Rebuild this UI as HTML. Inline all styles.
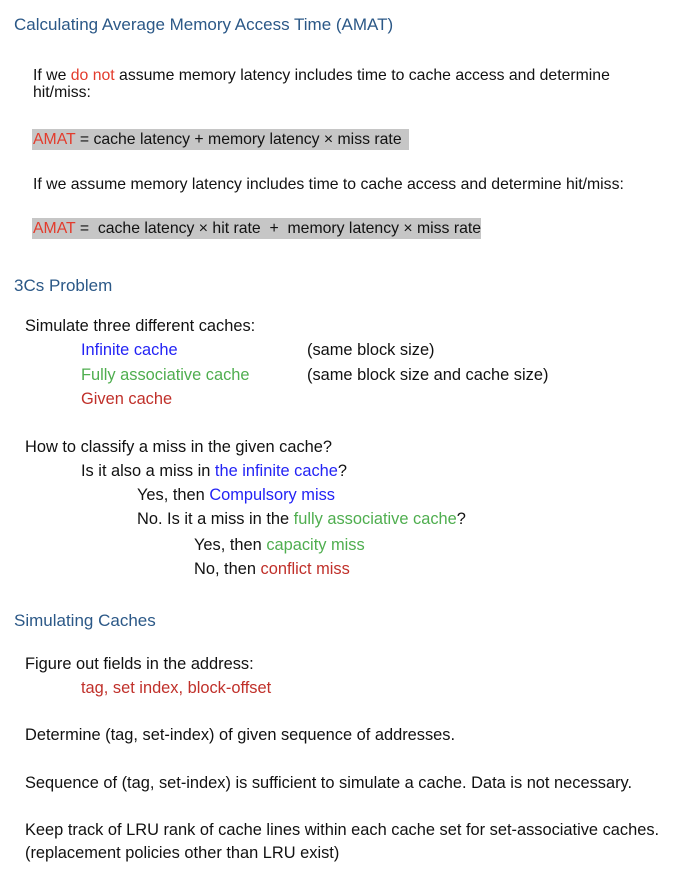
<!DOCTYPE html>
<html><head><meta charset="utf-8"><style>
body{margin:0;width:676px;height:880px;background:#fff;position:relative;font-family:"Liberation Sans",sans-serif;color:#111;overflow:hidden}
.t{position:absolute;white-space:nowrap;line-height:20px;height:20px}
.h{color:#2b5887;font-size:17px}
.s{font-size:15.8px}
.m{font-size:16.4px}
.r{color:#e33b2c}.dr{color:#c0302a}.b{color:#2323f5}.g{color:#4fae4f}
.bar{position:absolute;background:#c6c6c6}
</style></head><body>
<div class="t h" style="left:14px;top:15px">Calculating Average Memory Access Time (AMAT)</div>
<div class="t s" style="left:33px;top:66px">If we <span class="r">do not</span> assume memory latency includes time to cache access and determine</div>
<div class="t s" style="left:33px;top:83px">hit/miss:</div>
<div class="bar" style="left:32px;top:129px;width:377px;height:21px"></div>
<div class="t s" style="left:33px;top:130px"><span class="r">AMAT</span> = cache latency + memory latency × miss rate</div>
<div class="t s" style="left:33px;top:175px">If we assume memory latency includes time to cache access and determine hit/miss:</div>
<div class="bar" style="left:32px;top:218px;width:449px;height:21px"></div>
<div class="t s" style="left:33px;top:219px"><span class="r">AMAT</span> =&nbsp; cache latency × hit rate&nbsp; +&nbsp; memory latency × miss rate</div>

<div class="t h" style="left:14px;top:276px">3Cs Problem</div>
<div class="t m" style="left:25px;top:316px">Simulate three different caches:</div>
<div class="t m b" style="left:81px;top:340px">Infinite cache</div>
<div class="t m" style="left:307px;top:340px">(same block size)</div>
<div class="t m g" style="left:81px;top:365px">Fully associative cache</div>
<div class="t m" style="left:307px;top:365px">(same block size and cache size)</div>
<div class="t m dr" style="left:81px;top:389px">Given cache</div>
<div class="t m" style="left:25px;top:437px">How to classify a miss in the given cache?</div>
<div class="t m" style="left:81px;top:461px">Is it also a miss in <span class="b">the infinite cache</span>?</div>
<div class="t m" style="left:137px;top:485px">Yes, then <span class="b">Compulsory miss</span></div>
<div class="t m" style="left:137px;top:509px">No. Is it a miss in the <span class="g">fully associative cache</span>?</div>
<div class="t m" style="left:194px;top:535px">Yes, then <span class="g">capacity miss</span></div>
<div class="t m" style="left:194px;top:559px">No, then <span class="dr">conflict miss</span></div>

<div class="t h" style="left:14px;top:611px">Simulating Caches</div>
<div class="t m" style="left:25px;top:654px">Figure out fields in the address:</div>
<div class="t m dr" style="left:81px;top:678px">tag, set index, block-offset</div>
<div class="t m" style="left:25px;top:725px">Determine (tag, set-index) of given sequence of addresses.</div>
<div class="t m" style="left:25px;top:773px">Sequence of (tag, set-index) is sufficient to simulate a cache. Data is not necessary.</div>
<div class="t m" style="left:25px;top:820px">Keep track of LRU rank of cache lines within each cache set for set-associative caches.</div>
<div class="t m" style="left:25px;top:843px">(replacement policies other than LRU exist)</div>
</body></html>
